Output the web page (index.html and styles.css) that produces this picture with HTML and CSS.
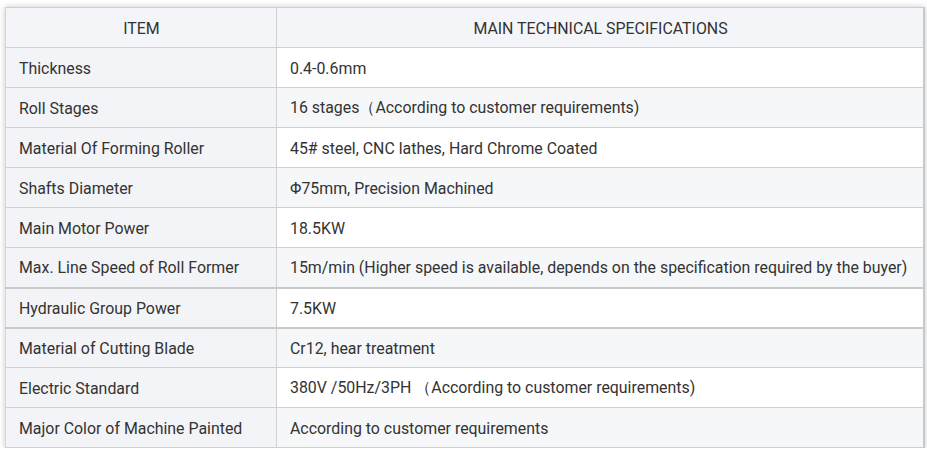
FILE: index.html
```html
<!DOCTYPE html>
<html>
<head>
<meta charset="utf-8">
<link rel="stylesheet" href="styles.css">
</head>
<body>
<div class="wrap">
<table class="spec">
  <thead>
    <tr><th class="k">ITEM</th><th class="v">MAIN TECHNICAL SPECIFICATIONS</th></tr>
  </thead>
  <tbody>
    <tr><td class="k">Thickness</td><td class="v">0.4-0.6mm</td></tr>
    <tr><td class="k">Roll Stages</td><td class="v">16 stages（According to customer requirements)</td></tr>
    <tr><td class="k">Material Of Forming Roller</td><td class="v">45# steel, CNC lathes, Hard Chrome Coated</td></tr>
    <tr><td class="k">Shafts Diameter</td><td class="v">Φ75mm, Precision Machined</td></tr>
    <tr><td class="k">Main Motor Power</td><td class="v">18.5KW</td></tr>
    <tr class="thick"><td class="k">Max. Line Speed of Roll Former</td><td class="v">15m/min (Higher speed is available, depends on the specification required by the buyer)</td></tr>
    <tr class="thick"><td class="k">Hydraulic Group Power</td><td class="v">7.5KW</td></tr>
    <tr><td class="k">Material of Cutting Blade</td><td class="v">Cr12, hear treatment</td></tr>
    <tr><td class="k">Electric Standard</td><td class="v">380V /50Hz/3PH （According to customer requirements)</td></tr>
    <tr><td class="k">Major Color of Machine Painted</td><td class="v">According to customer requirements</td></tr>
  </tbody>
</table>
</div>
</body>
</html>
```
FILE: styles.css
```css
html, body {
  margin: 0;
  background: #ffffff;
}
body {
  padding: 7px 2px 0 5px;
  font-family: Roboto, "Liberation Sans", sans-serif;
}
.wrap {
  width: 920px;
  box-shadow: 0 0 6px rgba(0, 0, 0, 0.22);
}
.spec {
  width: 920px;
  border-collapse: collapse;
  table-layout: fixed;
  font-size: 15.9px;
  color: #333333;
  border-right: 2px solid #c9c9c9;
}
.spec th, .spec td {
  height: 40px;
  padding: 1px 12px 0 13px;
  border: 1px solid #d0d0d0;
  vertical-align: middle;
  font-weight: 400;
  white-space: nowrap;
  box-sizing: border-box;
}
.spec th {
  text-align: center;
  background: #f4f5f8;
}
.spec th.k { width: 271px; }
.spec td { text-align: left; }
.spec td.k { background: #f3f4f7; }
.spec tbody tr:nth-child(odd) td.v { background: #ffffff; }
.spec tbody tr:nth-child(even) td.v { background: #f6f7f9; }
.spec tr.thick td { border-bottom: 2px solid #cacaca; }
.spec td.k, .spec th.k { border-left: 1px solid #d6d6d6; }
```
